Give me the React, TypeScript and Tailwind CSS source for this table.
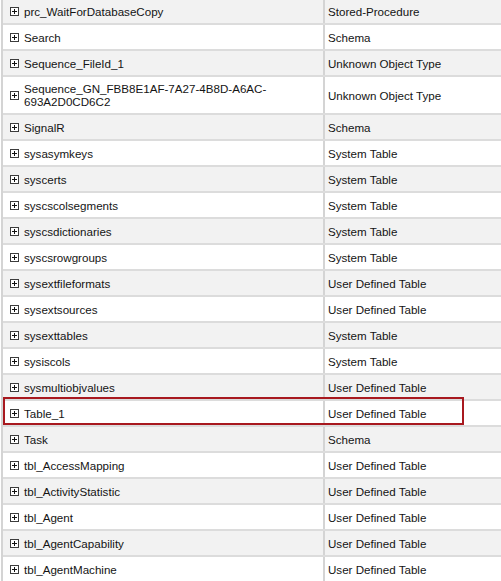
const rows: [string, string][] = [
  ["prc_WaitForDatabaseCopy", "Stored-Procedure"],
  ["Search", "Schema"],
  ["Sequence_FileId_1", "Unknown Object Type"],
  ["Sequence_GN_FBB8E1AF-7A27-4B8D-A6AC-693A2D0CD6C2", "Unknown Object Type"],
  ["SignalR", "Schema"],
  ["sysasymkeys", "System Table"],
  ["syscerts", "System Table"],
  ["syscscolsegments", "System Table"],
  ["syscsdictionaries", "System Table"],
  ["syscsrowgroups", "System Table"],
  ["sysextfileformats", "User Defined Table"],
  ["sysextsources", "User Defined Table"],
  ["sysexttables", "System Table"],
  ["sysiscols", "System Table"],
  ["sysmultiobjvalues", "User Defined Table"],
  ["Table_1", "User Defined Table"],
  ["Task", "Schema"],
  ["tbl_AccessMapping", "User Defined Table"],
  ["tbl_ActivityStatistic", "User Defined Table"],
  ["tbl_Agent", "User Defined Table"],
  ["tbl_AgentCapability", "User Defined Table"],
  ["tbl_AgentMachine", "User Defined Table"],
];

function ExpandIcon() {
  return (
    <svg width="9" height="9" viewBox="0 0 9 9" className="shrink-0">
      <rect x="0.5" y="0.5" width="8" height="8" fill="#fff" stroke="#3c3c3c" />
      <path d="M2 4.5h5M4.5 2v5" stroke="#111" strokeWidth="1" />
    </svg>
  );
}

export default function App() {
  return (
    <div
      className="w-[501px] h-[581px] overflow-hidden bg-white text-[11.6px] leading-[13px] text-[#141414]"
      style={{ fontFamily: '"Liberation Sans", Arial, sans-serif' }}
    >
      <div className="-mt-px ml-px border-l-2 border-[#d4d4d4]">
        {rows.map(([name, type], i) => (
          <div
            key={name}
            className={`relative flex border-b-2 border-[#dcdcdc] ${name.length > 40 ? "h-[38px]" : "h-[26px]"} ${i % 2 === 0 ? "bg-[#f2f2f2]" : "bg-white"}`}
          >
            <div className="w-[320px] shrink-0 flex items-center gap-[5px] pl-[7px] pr-2">
              <ExpandIcon />
              <span>{name}</span>
            </div>
            <div className="flex-1 flex items-center border-l-2 border-[#d4d4d4] pl-[3px]">
              {type}
            </div>
            {name === "Table_1" && (
              <div className="absolute left-0 top-[-4px] w-[461px] h-[28px] border-2 border-[#a8191f] pointer-events-none" />
            )}
          </div>
        ))}
      </div>
    </div>
  );
}
